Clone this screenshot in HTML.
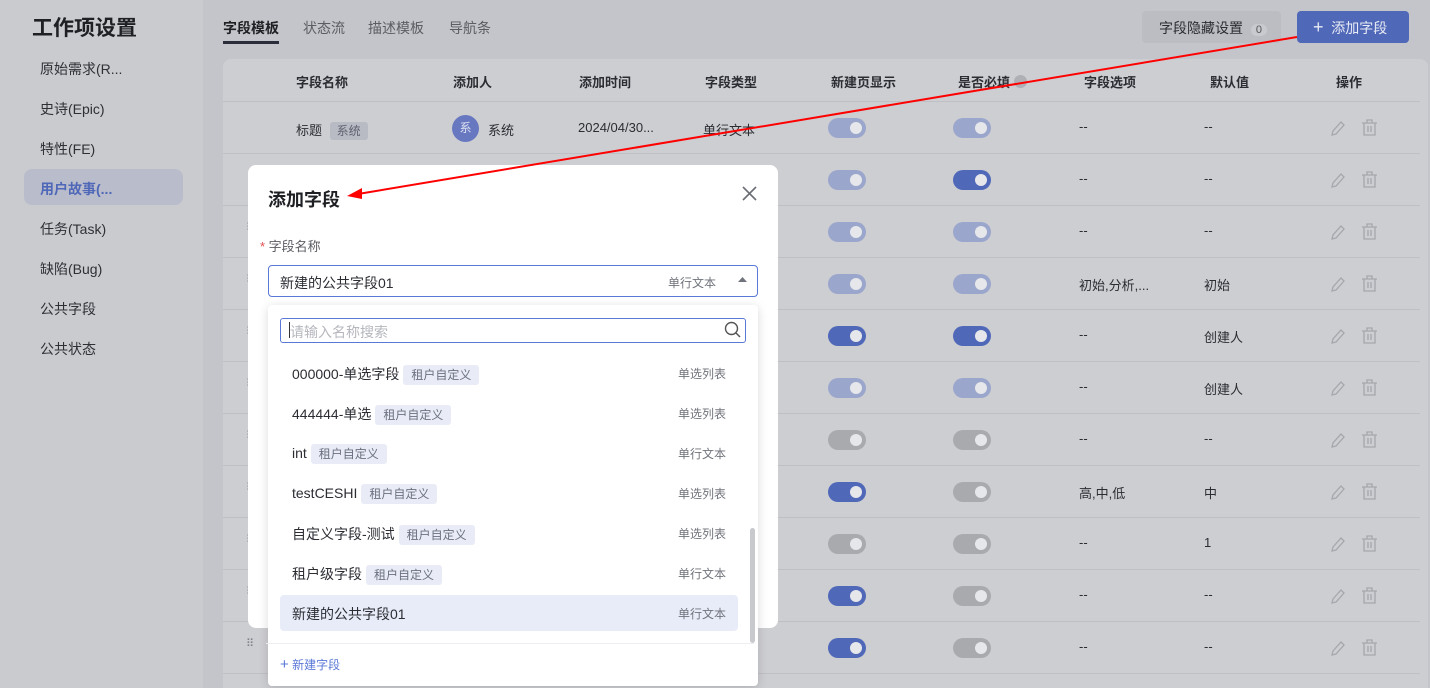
<!DOCTYPE html>
<html><head><meta charset="utf-8"><style>
*{box-sizing:border-box;margin:0;padding:0}
html,body{width:1430px;height:688px;overflow:hidden}
body{background:#c4c5ca;font-family:"Liberation Sans","Noto Sans CJK SC",sans-serif;font-size:14px;color:#2b2d33;position:relative}
.abs{position:absolute}
.side{left:0;top:0;width:203px;height:688px;background:#cacbcf}
.st{left:32px;top:12px;font-size:21px;font-weight:bold;color:#1f2024}
.si{left:40px;font-size:14px;color:#2e3036}
.sel{left:24px;top:169px;width:159px;height:36px;background:#b9bccb;border-radius:8px}
.tab{top:18px;font-size:14px;color:#5b5d63}
.card{left:223px;top:59px;width:1205px;height:629px;background:#cdced2;border-radius:8px 8px 0 0}
.th{top:72px;font-size:13px;font-weight:bold;color:#2b2d33}
.rl{left:223px;width:1197px;height:1px;background:#bfc0c5}
.tg{width:38px;height:20px;border-radius:10px}
.tg::after{content:"";position:absolute;right:4px;top:4px;width:12px;height:12px;border-radius:6px;background:#e6e7ea}
.L{background:#9ba6cc}.D{background:#5068b8}.G{background:#a9aaae}
.cell{font-size:13px;color:#2b2d33}
.dlg{left:248px;top:165px;width:530px;height:463px;background:#fff;border-radius:8px}
.dd{left:268px;top:305px;width:490px;height:381px;background:#fff;border-radius:4px;box-shadow:0 2px 10px rgba(0,0,0,.15)}
.it{left:292px;font-size:14px;color:#2b2d33}
.tag{display:inline-block;background:#e9ecf6;color:#6b7080;font-size:12px;padding:2px 8px;border-radius:3px;margin-left:4px;line-height:16px}
.ty{left:678px;font-size:12px;color:#70737b}
</style></head><body>
<div class="abs side"></div>
<div class="abs st">工作项设置</div>
<div class="abs sel"></div>
<div class="abs si" style="top:59px">原始需求(R...</div>
<div class="abs si" style="top:99px">史诗(Epic)</div>
<div class="abs si" style="top:139px">特性(FE)</div>
<div class="abs si" style="top:179px;color:#5068b8;font-weight:bold">用户故事(...</div>
<div class="abs si" style="top:219px">任务(Task)</div>
<div class="abs si" style="top:259px">缺陷(Bug)</div>
<div class="abs si" style="top:299px">公共字段</div>
<div class="abs si" style="top:339px">公共状态</div>

<div class="abs tab" style="left:223px;color:#1f2024;font-weight:bold">字段模板</div>
<div class="abs" style="left:223px;top:41px;width:56px;height:3px;background:#2b2d3a"></div>
<div class="abs tab" style="left:303px">状态流</div>
<div class="abs tab" style="left:368px">描述模板</div>
<div class="abs tab" style="left:449px">导航条</div>
<div class="abs" style="left:1142px;top:11px;width:139px;height:32px;background:#bcbdc2;border-radius:4px;font-size:14px;color:#2b2d33;padding:7px 0 0 17px">字段隐藏设置 <span style="display:inline-block;background:#c9cacf;border-radius:8px;font-size:11px;padding:0 5px;margin-left:4px;color:#555">0</span></div>
<div class="abs" style="left:1297px;top:11px;width:112px;height:32px;background:#5068b8;border-radius:4px;color:#e8ebf5;font-size:14px;padding:7px 0 0 16px"><span style="font-size:18px;line-height:14px">+</span>&nbsp; 添加字段</div>

<div class="abs card"></div>
<div class="abs th" style="left:296px">字段名称</div>
<div class="abs th" style="left:453px">添加人</div>
<div class="abs th" style="left:579px">添加时间</div>
<div class="abs th" style="left:705px">字段类型</div>
<div class="abs th" style="left:831px">新建页显示</div>
<div class="abs th" style="left:958px">是否必填 <span style="display:inline-block;width:13px;height:13px;border-radius:7px;background:#aeb0b6;vertical-align:-1px"></span></div>
<div class="abs th" style="left:1084px">字段选项</div>
<div class="abs th" style="left:1210px">默认值</div>
<div class="abs th" style="left:1336px">操作</div>
<div class="abs rl" style="top:101px"></div>
<div class="abs cell" style="left:296px;top:120px">标题 <span style="background:#b9bbc4;color:#5f6270;font-size:12px;padding:2px 7px;border-radius:3px;margin-left:4px">系统</span></div>
<div class="abs" style="left:452px;top:115px;width:27px;height:27px;border-radius:14px;background:#6878c0;color:#dde2f2;font-size:12px;text-align:center;line-height:27px">系</div>
<div class="abs cell" style="left:488px;top:120px">系统</div>
<div class="abs cell" style="left:578px;top:120px">2024/04/30...</div>
<div class="abs cell" style="left:703px;top:120px">单行文本</div>
<div id="rows"></div>

<svg class="abs" style="left:0;top:0" width="1430" height="688"><g id="icons" fill="none" stroke="#a5a7ad" stroke-width="1.3"></g></svg>

<div class="abs dlg"></div>
<div class="abs" style="left:268px;top:186px;font-size:18px;font-weight:bold;color:#1f2024">添加字段</div>
<svg class="abs" style="left:742px;top:186px" width="15" height="15"><path d="M1 1L14 14M14 1L1 14" stroke="#6b6e75" stroke-width="1.6"/></svg>
<div class="abs" style="left:260px;top:236px;font-size:13px;color:#5b5d63"><span style="color:#e34d4d">*</span> 字段名称</div>
<div class="abs" style="left:268px;top:265px;width:490px;height:32px;border:1px solid #5a78d6;border-radius:4px"></div>
<div class="abs" style="left:280px;top:273px;font-size:14px">新建的公共字段01</div>
<div class="abs" style="left:668px;top:274px;font-size:12px;color:#70737b">单行文本</div>
<svg class="abs" style="left:738px;top:277px" width="9" height="6"><path d="M0 5L4.5 0L9 5Z" fill="#70737b"/></svg>

<div class="abs dd"></div>
<div class="abs" style="left:280px;top:318px;width:466px;height:25px;border:1px solid #5a78d6;border-radius:3px"></div>
<div class="abs" style="left:290px;top:322px;font-size:14px;color:#b5b7bd">请输入名称搜索</div>
<div class="abs" style="left:289px;top:322px;width:1px;height:16px;background:#333"></div>
<svg class="abs" style="left:724px;top:321px" width="18" height="18"><circle cx="7.5" cy="7.5" r="6" fill="none" stroke="#555" stroke-width="1.4"/><path d="M12 12L16 16" stroke="#555" stroke-width="1.5"/></svg>
<div class="abs" style="left:280px;top:595px;width:458px;height:36px;background:#e8ecf8;border-radius:4px"></div>
<div class="abs it" style="top:364px">000000-单选字段<span class="tag">租户自定义</span></div><div class="abs ty" style="top:365px">单选列表</div>
<div class="abs it" style="top:404px">444444-单选<span class="tag">租户自定义</span></div><div class="abs ty" style="top:405px">单选列表</div>
<div class="abs it" style="top:444px">int<span class="tag">租户自定义</span></div><div class="abs ty" style="top:445px">单行文本</div>
<div class="abs it" style="top:484px">testCESHI<span class="tag">租户自定义</span></div><div class="abs ty" style="top:485px">单选列表</div>
<div class="abs it" style="top:524px">自定义字段-测试<span class="tag">租户自定义</span></div><div class="abs ty" style="top:525px">单选列表</div>
<div class="abs it" style="top:564px">租户级字段<span class="tag">租户自定义</span></div><div class="abs ty" style="top:565px">单行文本</div>
<div class="abs it" style="top:604px">新建的公共字段01</div><div class="abs ty" style="top:605px">单行文本</div>
<div class="abs" style="left:750px;top:528px;width:5px;height:115px;background:#c8c9cd;border-radius:3px"></div>
<div class="abs" style="left:266px;top:643px;width:488px;height:1px;background:#eceef2"></div>
<div class="abs" style="left:280px;top:656px;font-size:12px;color:#5a78d6"><span style="font-size:15px">+</span> 新建字段</div>

<svg class="abs" style="left:0;top:0" width="1430" height="688"><path d="M1297 37L358 194" stroke="#f00" stroke-width="2"/><path d="M347 196L362 188L362 199Z" fill="#f00"/></svg>

<script>
var st=[["L","L","--","--"],["L","D","--","--"],["L","L","--","--"],["L","L","初始,分析,...","初始"],["D","D","--","创建人"],["L","L","--","创建人"],["G","G","--","--"],["D","G","高,中,低","中"],["G","G","--","1"],["D","G","--","--"],["D","G","--","--"]];
var h="",ic="";
st.forEach(function(r,i){var c=128+52*i;
h+='<div class="abs tg '+r[0]+'" style="left:828px;top:'+(c-10)+'px"></div><div class="abs tg '+r[1]+'" style="left:953px;top:'+(c-10)+'px"></div>';
h+='<div class="abs cell" style="left:1079px;top:'+(c-9)+'px">'+r[2]+'</div><div class="abs cell" style="left:1204px;top:'+(c-9)+'px">'+r[3]+'</div>';
h+='<div class="abs rl" style="top:'+(c+25)+'px"></div>';
if(i>=2)h+='<div class="abs" style="left:246px;top:'+(c-6)+'px;font-size:11px;color:#80828a;line-height:4px">⠿</div>';
ic+='<path d="M1332 '+(c+7)+'L1333 '+(c+3)+'L1341 '+(c-6)+'L1344 '+(c-3)+'L1336 '+(c+6)+'Z"/>';
ic+='<path d="M1362 '+(c-5)+'H1377M1367 '+(c-5)+'V'+(c-8)+'H1372V'+(c-5)+'M1364 '+(c-5)+'V'+(c+7)+'H1375V'+(c-5)+'M1368 '+(c-2)+'V'+(c+4)+'M1371 '+(c-2)+'V'+(c+4)+'"/>';
});
document.getElementById("rows").outerHTML=h;
document.getElementById("icons").innerHTML=ic;
</script>
</body></html>
